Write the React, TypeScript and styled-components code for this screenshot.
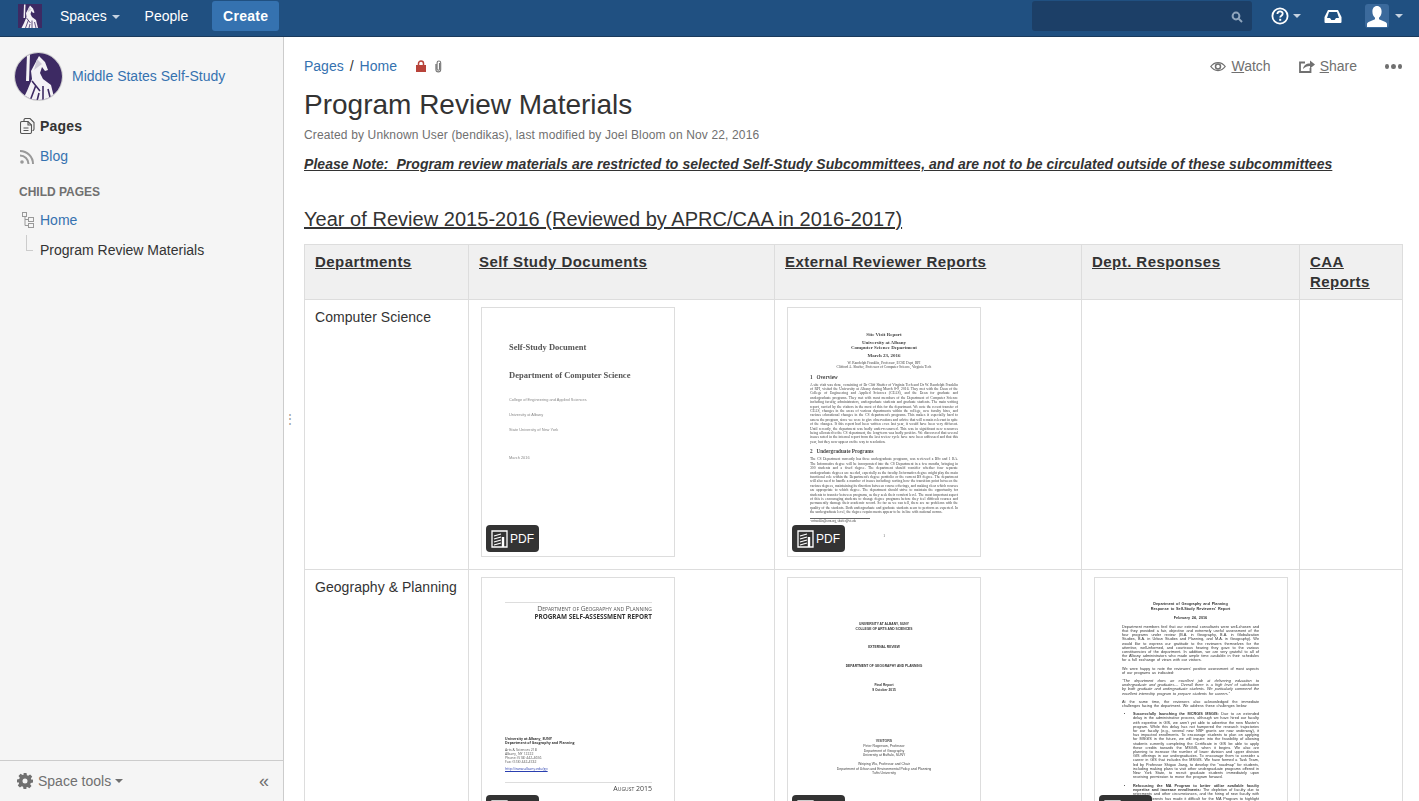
import React from 'react';
import styled, {createGlobalStyle} from 'styled-components';

const GlobalStyle = createGlobalStyle`
    html, body {
        margin: 0;
        height: 100%;
        overflow: hidden;
        background: #fff;
        font-family: 'Liberation Sans', Arial, sans-serif;
        font-size: 14px;
        line-height: 20px;
        color: #333;
    }
    * { box-sizing: border-box; }
`

const StatueLogo = ({size}: {size: number}) => (
    <svg width={size} height={size} viewBox="0 0 48 48">
        <rect width="48" height="48" fill="#3d2a63"/>
        <path fill="#f4f2f6" d="M12 1h3l-1 27h-3z"/>
        <path fill="#f4f2f6" d="M24 3l6 6 3 8-3 1-3-4-2 6 3 6 8 6 4 16H7l5-10 5-12-1-8z"/>
        <path fill="none" stroke="#3d2a63" strokeWidth="1.6" d="M17 28l8 10M21 32l-6 16M28 33v15M33 36l3 12M24 40l-2 8"/>
        <path fill="#cfcad8" d="M22 6l5 5-8 6z"/>
    </svg>
)

const Caret = styled.span<{$color?: string}>`
    display: inline-block;
    width: 0;
    height: 0;
    border-left: 4px solid transparent;
    border-right: 4px solid transparent;
    border-top: 4px solid ${props => props.$color || '#c5d2e0'};
`

const PdfIcon = () => (
    <svg width="18" height="18" viewBox="0 0 18 18" fill="none" stroke="#fff" strokeWidth="1.3">
        <path d="M1 1h11l4 0v16H1z"/>
        <path d="M3 6l7-2M3 9l7-2M3 12l7-2M3 15l7-2"/>
        <path d="M12 7v10" strokeWidth="2.4"/>
    </svg>
)

const PdfLabel = () => (
    <Badge><PdfIcon/>PDF</Badge>
)

export default function App() {
    return (
        <>
            <GlobalStyle/>
            <TopBar>
                <LogoSlot><StatueLogo size={24}/></LogoSlot>
                <NavItem>Spaces <Caret/></NavItem>
                <NavItem>People</NavItem>
                <CreateButton>Create</CreateButton>
                <TopRight>
                    <SearchBox>
                        <svg width="12" height="12" viewBox="0 0 12 12" fill="none" stroke="#8fa5bd" strokeWidth="2">
                            <circle cx="5" cy="5" r="3.4"/>
                            <path d="M7.6 7.6L11 11"/>
                        </svg>
                    </SearchBox>
                    <IconSlot>
                        <svg width="18" height="18" viewBox="0 0 18 18">
                            <circle cx="9" cy="9" r="7.6" fill="none" stroke="#fff" strokeWidth="1.8"/>
                            <path d="M6.4 7c0-3.4 5.4-3.4 5.3-.2 0 2-2.5 2-2.5 3.8" fill="none" stroke="#fff" strokeWidth="1.8"/>
                            <rect x="8.2" y="11.8" width="2" height="2" fill="#fff"/>
                        </svg>
                        <Caret/>
                    </IconSlot>
                    <InboxSlot>
                        <svg width="18" height="14" viewBox="0 0 18 14">
                            <path fill="#fff" fillRule="evenodd" d="M4 1h10l3.500 7v5a1 1 0 0 1-1 1h-15a1 1 0 0 1-1-1V8zM5 3L3 9h3l1.400 2h3.200L12 9h3l-2-6z"/>
                        </svg>
                    </InboxSlot>
                    <AvatarSlot>
                        <AvatarBox>
                            <svg width="20" height="21" viewBox="0 0 20 21">
                                <path fill="#fff" d="M10 0c3 0 4.600 2.400 4.600 5.600 0 2.600-1 5-2.600 6.200v1.400l6.400 2.800c1 .5 1.600 1.200 1.600 2.200V21H0v-2.800c0-1 .6-1.700 1.600-2.200L8 13.200v-1.400C6.400 10.600 5.400 8.200 5.400 5.600 5.400 2.400 7 0 10 0z"/>
                            </svg>
                        </AvatarBox>
                        <Caret/>
                    </AvatarSlot>
                </TopRight>
            </TopBar>
            <Layout>
                <Sidebar>
                    <SideTop>
                        <SpaceHead>
                            <SpaceAvatar><StatueLogo size={48}/></SpaceAvatar>
                            <SideLink>Middle States Self-Study</SideLink>
                        </SpaceHead>
                        <SideNav>
                            <SideRow>
                                <svg width="15" height="16" viewBox="0 0 15 16" fill="none" stroke="#555" strokeWidth="1.1">
                                    <path d="M4 3.500V2a1.500 1.500 0 0 1 1.500-1.500H10L14 4.500V11a1.500 1.500 0 0 1-1.500 1.500"/>
                                    <path d="M2 3.500h6l3.500 3.500v7a1.500 1.500 0 0 1-1.500 1.500H2A1.500 1.500 0 0 1 .500 14V5A1.500 1.500 0 0 1 2 3.500z"/>
                                    <path d="M8 3.500V7h3.500M3.500 10h5M3.500 12.500h5"/>
                                </svg>
                                <strong>Pages</strong>
                            </SideRow>
                            <SideRow>
                                <svg width="15" height="15" viewBox="0 0 15 15" fill="none" stroke="#999" strokeWidth="2">
                                    <path d="M0 6.500a8.500 8.500 0 0 1 8.500 8.500M0 2a13 13 0 0 1 13 13"/>
                                    <circle cx="2" cy="13" r="1.800" fill="#999" stroke="none"/>
                                </svg>
                                <SideLink>Blog</SideLink>
                            </SideRow>
                        </SideNav>
                        <SideHeading>CHILD PAGES</SideHeading>
                        <SideRow>
                            <TreeIconSlot>
                                <svg width="12" height="16" viewBox="0 0 12 16" fill="none" stroke="#999">
                                    <rect x=".5" y=".5" width="4" height="4"/>
                                    <rect x="6.500" y="5.500" width="5" height="4"/>
                                    <rect x="6.500" y="11.500" width="5" height="4"/>
                                    <path d="M3 4.500V13.500H6.500M3 7.500H6.500"/>
                                </svg>
                            </TreeIconSlot>
                            <SideLink>Home</SideLink>
                        </SideRow>
                        <TreeChild>Program Review Materials</TreeChild>
                    </SideTop>
                    <SideFooter>
                        <svg width="16" height="16" viewBox="0 0 16 16">
                            <path fill="#707070" fillRule="evenodd" d="M6.500 0h3l.4 2.200 1.300.6L13.100 1.500l2.100 2.100-1.300 1.900.6 1.300L16 6.500v3l-2.200.4-.6 1.300 1.300 1.900-2.100 2.100-1.900-1.300-1.300.6L9.500 16h-3l-.4-2.200-1.300-.6-1.900 1.300-2.100-2.100 1.300-1.900-.6-1.300L0 9.500v-3l2.200-.4.600-1.300L1.500 2.900 3.600.8l1.900 1.300 1.300-.6zM8 5.500a2.500 2.500 0 1 0 0 5 2.500 2.500 0 0 0 0-5z"/>
                        </svg>
                        <FooterLabel>Space tools</FooterLabel>
                        <Caret $color="#707070"/>
                        <Collapse>«</Collapse>
                    </SideFooter>
                </Sidebar>
                <Main>
                    <Splitter>⋮</Splitter>
                    <PageTop>
                        <Crumbs>
                            <BlueLink>Pages</BlueLink>
                            <Slash>/</Slash>
                            <BlueLink>Home</BlueLink>
                            <CrumbIcons>
                                <svg width="10" height="12" viewBox="0 0 10 12">
                                    <path fill="none" stroke="#b8433a" strokeWidth="1.500" d="M2.500 5.500V3.500a2.500 2.500 0 0 1 5 0v2"/>
                                    <rect y="5" width="10" height="7" fill="#b8433a"/>
                                </svg>
                                <svg width="9" height="13" viewBox="0 0 9 13" fill="none" stroke="#777" strokeWidth="1.100">
                                    <path d="M5.500 3v6a1.200 1.200 0 0 1-2.400 0V2.800a1.500 1.500 0 0 1 3.600 0v6.700a2.300 2.300 0 0 1-4.800 0V4"/>
                                </svg>
                            </CrumbIcons>
                        </Crumbs>
                        <Actions>
                            <ActionItem>
                                <svg width="16" height="11" viewBox="0 0 16 11" fill="none" stroke="#707070" strokeWidth="1.300">
                                    <path d="M.8 5.500C4.500.2 11.500.2 15.200 5.500 11.500 10.800 4.500 10.800.8 5.500z"/>
                                    <circle cx="8" cy="5.500" r="2.500" strokeWidth="1.500"/>
                                </svg>
                                <span><u>W</u>atch</span>
                            </ActionItem>
                            <ActionItem>
                                <svg width="16" height="14" viewBox="0 0 16 14">
                                    <path fill="none" stroke="#707070" strokeWidth="1.800" d="M6 3.500H1v9.500h10.500V9"/>
                                    <path fill="#707070" d="M4 10c.5-3.500 3-5.500 7-5.500V1.500L16 5.500 11 9.500V7C8 7 6 8 4 10z"/>
                                </svg>
                                <span><u>S</u>hare</span>
                            </ActionItem>
                            <MoreDots><i/><i/><i/></MoreDots>
                        </Actions>
                    </PageTop>
                    <Title>Program Review Materials</Title>
                    <Meta>Created by Unknown User (bendikas), last modified by Joel Bloom on Nov 22, 2016</Meta>
                    <Note>Please Note:&nbsp; Program review materials are restricted to selected Self-Study Subcommittees, and are not to be circulated outside of these subcommittees</Note>
                    <YearHeading>Year of Review 2015-2016 (Reviewed by APRC/CAA in 2016-2017)</YearHeading>
                    <ReviewTable>
                        <colgroup>
                            <col style={{width: 164}}/>
                            <col style={{width: 306}}/>
                            <col style={{width: 307}}/>
                            <col style={{width: 218}}/>
                            <col style={{width: 103}}/>
                        </colgroup>
                        <thead>
                            <tr>
                                <HeadCell>Departments</HeadCell>
                                <HeadCell>Self Study Documents</HeadCell>
                                <HeadCell>External Reviewer Reports</HeadCell>
                                <HeadCell>Dept. Responses</HeadCell>
                                <HeadCell>CAA Reports</HeadCell>
                            </tr>
                        </thead>
                        <tbody>
                            <tr>
                                <Cell>Computer Science</Cell>
                                <Cell>
                                    <Thumb>
                                        <CoverOne>
                                            <CoverTitle>Self-Study Document</CoverTitle>
                                            <CoverTitle>Department of Computer Science</CoverTitle>
                                            <CoverSmall>College of Engineering and Applied Sciences</CoverSmall>
                                            <CoverSmall>University at Albany</CoverSmall>
                                            <CoverSmall>State University of New York</CoverSmall>
                                            <CoverDate>March 2016</CoverDate>
                                        </CoverOne>
                                        <PdfLabel/>
                                    </Thumb>
                                </Cell>
                                <Cell>
                                    <Thumb>
                                        <Report>
                                            <ReportHead>Site Visit Report</ReportHead>
                                            <ReportHead>University at Albany<br/>Computer Science Department</ReportHead>
                                            <ReportHead>March 23, 2016</ReportHead>
                                            <ReportAuthors>W. Randolph Franklin, Professor, ECSE Dept, RPI<br/>Clifford A. Shaffer, Professor of Computer Science, Virginia Tech</ReportAuthors>
                                            <ReportSection>1&nbsp;&nbsp;&nbsp;Overview</ReportSection>
                                            <ReportBody>A site visit was done, consisting of Dr Cliff Shaffer of Virginia Tech and Dr W. Randolph Franklin of RPI, visited the University at Albany during March 8-9, 2016. They met with the Dean of the College of Engineering and Applied Sciences (CEAS), and the Dean for graduate and undergraduate programs. They met with most members of the Department of Computer Science including faculty, administrators, undergraduate students and graduate students. The main writing report, carried by the visitors in the most of this for the department. We note the recent transfer of CEAS, changes in the areas of various departments within the college, new faculty hires, and various educational changes in the CS department's programs. This makes it especially hard to assess the program, since we were to give observations and advice that will remain relevant in spite of the changes. If this report had been written even last year, it would have been very different. Until recently, the department was badly under-resourced. This was in significant new resources being allocated to the CS department, the long-term was badly positive. We discovered that several issues noted in the internal report from the last review cycle have now been addressed and that this year, but they now appear on the way to resolution.</ReportBody>
                                            <ReportSection>2&nbsp;&nbsp;&nbsp;Undergraduate Programs</ReportSection>
                                            <ReportBody>The CS Department currently has three undergraduate programs, was reviewed a BSc and 1 BA. The Informatics degree will be incorporated into the CS Department in a few months, bringing in 300 students and a fixed degree. The department should consider whether four separate undergraduate degrees are needed, especially as the faculty. Informatics degree might play the main functional role within the Department's degree portfolio or the current BS degree. The department will also need to handle a number of issues including: sorting how the transition point between the various degrees, maintaining its direction between course offerings, and making clear which courses are appropriate to which degree. The department should strive to maintain the opportunity for students to transfer between programs, as they seek their comfort level. The most important aspect of this is encouraging students to change degree programs before they feel difficult courses and permanently damage their academic record. So far as we can tell, there are no problems with the quality of the students. Both undergraduate and graduate students seem to perform as expected. In the undergraduate level, the degree requirements appear to be in line with national norms.</ReportBody>
                                            <Footnote>¹wrfranklin@acm.org, shaffer@vt.edu</Footnote>
                                            <PageNumber>1</PageNumber>
                                        </Report>
                                        <PdfLabel/>
                                    </Thumb>
                                </Cell>
                                <Cell/>
                                <Cell/>
                            </tr>
                            <tr>
                                <Cell>Geography &amp; Planning</Cell>
                                <Cell>
                                    <Thumb>
                                        <GeoCover>
                                            <GeoRule/>
                                            <GeoDept>Department of Geography and Planning</GeoDept>
                                            <GeoTitle>PROGRAM SELF-ASSESSMENT REPORT</GeoTitle>
                                            <GeoAddress>
                                                <strong>University at Albany, SUNY<br/>Department of Geography and Planning</strong>
                                                <p>Arts &amp; Sciences 218<br/>Albany, NY 12222<br/>Phone: (518) 442-4656<br/>Fax: (518) 442-4742</p>
                                                <GeoUrl>http://www.albany.edu/gp</GeoUrl>
                                            </GeoAddress>
                                            <GeoRule/>
                                            <GeoDate>August 2015</GeoDate>
                                        </GeoCover>
                                        <PdfLabel/>
                                    </Thumb>
                                </Cell>
                                <Cell>
                                    <Thumb>
                                        <ReviewCover>
                                            <strong>UNIVERSITY AT ALBANY, SUNY<br/>COLLEGE OF ARTS AND SCIENCES</strong>
                                            <strong>EXTERNAL REVIEW</strong>
                                            <strong>DEPARTMENT OF GEOGRAPHY AND PLANNING</strong>
                                            <strong>Final Report<br/>9 October 2015</strong>
                                            <ReviewVisitors>
                                                <strong>VISITORS</strong><br/>
                                                Peter Rogerson, Professor<br/>Department of Geography<br/>University at Buffalo, SUNY
                                            </ReviewVisitors>
                                            <div>Weiping Wu, Professor and Chair<br/>Department of Urban and Environmental Policy and Planning<br/>Tufts University</div>
                                        </ReviewCover>
                                        <PdfLabel/>
                                    </Thumb>
                                </Cell>
                                <Cell>
                                    <Thumb>
                                        <Response>
                                            <ResponseHead>Department of Geography and Planning<br/>Response to Self-Study Reviewers' Report</ResponseHead>
                                            <ResponseHead>February 24, 2016</ResponseHead>
                                            <p>Department members feel that our external consultants were well-chosen and that they provided a fair, objective and extremely useful assessment of the four programs under review (B.A. in Geography, B.A. in Globalization Studies, B.A. in Urban Studies and Planning, and M.A. in Geography). We would like to express our gratitude to the reviewers themselves for the attentive, well-informed, and courteous hearing they gave to the various constituencies of the department. In addition, we are very grateful to all of the Albany administrators who made ample time available in their schedules for a full exchange of views with our visitors.</p>
                                            <p>We were happy to note the reviewers' positive assessment of most aspects of our programs as indicated:</p>
                                            <p><em>"The department does an excellent job at delivering education to undergraduate and graduates.... Overall there is a high level of satisfaction by both graduate and undergraduate students. We particularly commend the excellent internship program to prepare students for careers."</em></p>
                                            <p>At the same time, the reviewers also acknowledged the immediate challenges facing the department. We address these challenges below:</p>
                                            <ResponseList>
                                                <li><strong>Successfully launching the MCRGIS MSGIS:</strong> Due to an extended delay in the administrative process, although we have hired our faculty with expertise in GIS, we aren't yet able to advertise the new Master's program. While this delay has not hampered the research trajectories for our faculty (e.g., several new NSF grants are now underway), it has impacted enrollments. To encourage students to plan on applying for MSGIS in the future, we will inquire into the feasibility of allowing students currently completing the Certificate in GIS be able to apply these credits towards the MSGIS, when it begins. We also are planning to increase the number of lower division and upper division GIS offerings in our undergraduates. To encourage them to consider a career in GIS that includes the MSGIS. We have formed a Task Team, led by Professor Shiguo Jiang, to develop the "roadmap" for students, including making plans to visit other undergraduate programs offered in New York State, to recruit graduate students immediately upon receiving permission to move the program forward.</li>
                                                <li><strong>Refocusing the MA Program to better utilize available faculty expertise and increase enrollments:</strong> The depletion of faculty due to retirements and other circumstances, and the hiring of new faculty with different interests has made it difficult for the MA Program to highlight career paths and</li>
                                            </ResponseList>
                                        </Response>
                                        <PdfLabel/>
                                    </Thumb>
                                </Cell>
                                <Cell/>
                            </tr>
                        </tbody>
                    </ReviewTable>
                </Main>
            </Layout>
        </>
    );
}

const TopBar = styled.header`
    height: 37px;
    background: #205081;
    border-bottom: 1px solid #1a3a5c;
    display: flex;
    align-items: flex-start;
    color: #fff;
`
const LogoSlot = styled.div`
    width: 60px;
    height: 36px;
    padding: 4px 0 0 18px;
    flex-shrink: 0;
    & svg { display: block; }
`
const NavItem = styled.div`
    height: 32px;
    line-height: 32px;
    margin-right: 25px;
    color: #fff;
    white-space: nowrap;
    & span { margin-left: 1px; vertical-align: 2px; }
`
const CreateButton = styled.div`
    width: 67px;
    height: 30px;
    margin: 1px 0 0 -1px;
    border-radius: 3px;
    background: #3572b0;
    font-weight: 700;
    letter-spacing: 0.3px;
    line-height: 30px;
    text-align: center;
`
const TopRight = styled.div`
    margin-left: auto;
    display: flex;
    align-items: center;
    height: 36px;
`
const SearchBox = styled.div`
    width: 220px;
    height: 30px;
    margin: -5px 19px 0 0;
    background: #1c3f67;
    border-radius: 3px;
    display: flex;
    align-items: center;
    justify-content: flex-end;
    padding: 3px 9px 0 0;
`
const IconSlot = styled.div`
    display: flex;
    align-items: center;
    gap: 4px;
    margin: -4px 0 0 0;
    width: 33px;
`
const InboxSlot = styled.div`
    margin: -4px 23px 0 20px;
    display: flex;
    width: 18px;
`
const AvatarSlot = styled.div`
    display: flex;
    align-items: center;
    gap: 6px;
    margin: -4px 16px 0 0;
`
const AvatarBox = styled.div`
    width: 24px;
    height: 24px;
    background: #3b6a9c;
    border-radius: 3px;
    display: flex;
    align-items: flex-end;
    justify-content: center;
    padding-bottom: 1px;
`
const Layout = styled.div`
    display: flex;
    height: 764px;
`
const Sidebar = styled.aside`
    width: 284px;
    flex-shrink: 0;
    background: #f5f5f5;
    border-right: 1px solid #ccc;
    display: flex;
    flex-direction: column;
    justify-content: space-between;
`
const SideTop = styled.div`
    padding: 14px 14px 0 19px;
`
const SpaceHead = styled.div`
    display: flex;
    align-items: center;
    gap: 9px;
    margin: 0 0 10px -5px;
    height: 50px;
`
const SpaceAvatar = styled.div`
    width: 49px;
    height: 49px;
    border-radius: 50%;
    border: 1px solid #ccc;
    overflow: hidden;
    flex-shrink: 0;
    & svg { display: block; }
`
const SideLink = styled.a`
    color: #3572b0;
`
const SideNav = styled.div`
    margin-bottom: 11px;
`
const SideRow = styled.div`
    display: flex;
    align-items: center;
    height: 30px;
    gap: 5px;
    color: #333;
    & > svg { flex-shrink: 0; margin-left: 1px; }
    & strong { color: #333; letter-spacing: 0.2px; }
`
const SideHeading = styled.div`
    font-size: 12px;
    font-weight: 700;
    color: #707070;
    height: 20px;
    line-height: 20px;
    margin-bottom: 3px;
`
const TreeIconSlot = styled.div`
    width: 16px;
    padding-left: 3px;
    display: flex;
`
const TreeChild = styled.div`
    position: relative;
    height: 30px;
    line-height: 30px;
    padding-left: 21px;
    color: #333;
    &::before {
        content: '';
        position: absolute;
        left: 7px;
        top: 0;
        width: 6px;
        height: 15px;
        border-left: 1px solid #ccc;
        border-bottom: 1px solid #ccc;
    }
`
const SideFooter = styled.div`
    height: 41px;
    border-top: 1px solid #ccc;
    display: flex;
    align-items: center;
    padding: 0 14px 0 17px;
    color: #707070;
`
const FooterLabel = styled.span`
    margin: 0 4px 0 5px;
`
const Collapse = styled.span`
    margin-left: auto;
    font-size: 18px;
    color: #707070;
`
const Main = styled.main`
    position: relative;
    flex: 1;
    min-width: 0;
    padding: 19px 17px 0 20px;
`
const Splitter = styled.span`
    position: absolute;
    left: 0;
    top: 372px;
    color: #999;
    font-size: 12px;
`
const PageTop = styled.div`
    display: flex;
    justify-content: space-between;
    align-items: center;
    height: 20px;
`
const Crumbs = styled.div`
    display: flex;
    align-items: center;
`
const BlueLink = styled.a`
    color: #3572b0;
`
const Slash = styled.span`
    margin: 0 6px;
    color: #333;
`
const CrumbIcons = styled.span`
    display: flex;
    align-items: center;
    gap: 8px;
    margin-left: 19px;
`
const Actions = styled.div`
    display: flex;
    align-items: center;
    color: #707070;
`
const ActionItem = styled.div`
    display: flex;
    align-items: center;
    gap: 5px;
    margin-right: 28px;
    & u { text-decoration: underline; }
`
const MoreDots = styled.div`
    display: flex;
    gap: 2px;
    width: 17px;
    & i {
        display: block;
        width: 5px;
        height: 5px;
        border-radius: 50%;
        background: #707070;
    }
`
const Title = styled.h1`
    margin: 10px 0 0;
    font-size: 28px;
    font-weight: 400;
    line-height: 38px;
    color: #333;
`
const Meta = styled.div`
    margin-top: 1px;
    font-size: 12px;
    letter-spacing: 0.14px;
    line-height: 20px;
    color: #707070;
`
const Note = styled.p`
    margin: 9px 0 0;
    font-weight: 700;
    font-style: italic;
    letter-spacing: 0.045px;
    text-decoration: underline;
    color: #333;
`
const YearHeading = styled.h2`
    margin: 30px 0 0;
    font-size: 20px;
    font-weight: 400;
    letter-spacing: 0.03px;
    line-height: 30px;
    text-decoration: underline;
    color: #333;
`
const ReviewTable = styled.table`
    margin-top: 10px;
    width: 1098px;
    table-layout: fixed;
    border-collapse: collapse;
`
const Cell = styled.td`
    border: 1px solid #ddd;
    padding: 7px 10px;
    vertical-align: top;
    letter-spacing: 0.05px;
    color: #333;
`
const HeadCell = styled.th`
    border: 1px solid #ddd;
    padding: 7px 10px;
    vertical-align: top;
    text-align: left;
    background: #f0f0f0;
    font-size: 15px;
    font-weight: 700;
    letter-spacing: 0.45px;
    text-decoration: underline;
    color: #333;
`
const Thumb = styled.div`
    position: relative;
    width: 194px;
    height: 250px;
    margin: 0 0 5px 2px;
    border: 1px solid #ddd;
    background: #fff;
    overflow: hidden;
    letter-spacing: 0;
`
const Badge = styled.div`
    position: absolute;
    left: 4px;
    bottom: 4px;
    width: 53px;
    height: 27px;
    border-radius: 4px;
    background: #333;
    color: #fff;
    display: flex;
    align-items: center;
    gap: 1px;
    padding-left: 5px;
    font-size: 12px;
`
const CoverOne = styled.div`
    padding: 33px 0 0 27px;
    color: #555;
    font-family: 'Liberation Serif', serif;
    filter: blur(0.35px);
`
const CoverTitle = styled.div`
    font-size: 8.500px;
    font-weight: 700;
    line-height: 12px;
    margin-bottom: 16px;
    color: #555;
`
const CoverSmall = styled.div`
    font-family: 'Liberation Sans', sans-serif;
    font-size: 3.900px;
    line-height: 5px;
    margin-bottom: 10px;
    color: #888;
`
const CoverDate = styled(CoverSmall)`
    margin-top: 23px;
`
const Report = styled.div`
    padding: 24px 22px 0;
    font-family: 'Liberation Serif', serif;
    color: #444;
    filter: blur(0.3px);
`
const ReportHead = styled.div`
    text-align: center;
    font-weight: 700;
    font-size: 5px;
    line-height: 5px;
    margin-bottom: 3px;
    color: #444;
`
const ReportAuthors = styled.div`
    text-align: center;
    font-size: 3.600px;
    line-height: 4.300px;
    margin-bottom: 4px;
`
const ReportSection = styled.div`
    font-size: 5.200px;
    font-weight: 700;
    line-height: 7px;
    margin-bottom: 2px;
    color: #444;
`
const ReportBody = styled.p`
    margin: 0 0 4px;
    font-size: 3.700px;
    line-height: 4.400px;
    text-align: justify;
`
const Footnote = styled.div`
    margin-top: -1px;
    border-top: 1px solid #666;
    width: 60px;
    font-size: 3px;
    line-height: 4px;
    white-space: nowrap;
`
const PageNumber = styled.div`
    margin-top: 11px;
    text-align: center;
    font-size: 3.400px;
    line-height: 4px;
`
const GeoCover = styled.div`
    padding: 24px 22px 0 23px;
    font-family: 'Open Sans', 'Liberation Sans', sans-serif;
    color: #444;
    filter: blur(0.25px);
`
const GeoRule = styled.div`
    border-top: 1px solid #ddd;
`
const GeoDept = styled.div`
    margin-top: 2px;
    text-align: right;
    font-size: 6.800px;
    line-height: 7px;
    font-variant: small-caps;
    white-space: nowrap;
    color: #555;
`
const GeoTitle = styled.div`
    text-align: right;
    font-size: 6.400px;
    font-weight: 700;
    line-height: 9px;
    white-space: nowrap;
    color: #333;
`
const GeoAddress = styled.div`
    margin: 116px 0 11px 0;
    font-size: 3.500px;
    line-height: 4.200px;
    color: #333;
    & strong { display: block; }
    & p { margin: 3px 0; color: #555; line-height: 3.800px; }
`
const GeoUrl = styled.div`
    color: #2a3fb0;
    text-decoration: underline;
    margin-top: 3px;
`
const GeoDate = styled.div`
    margin-top: 2px;
    text-align: right;
    font-size: 7px;
    line-height: 8px;
    font-variant: small-caps;
    color: #444;
`
const ReviewCover = styled.div`
    padding: 44px 10px 0;
    text-align: center;
    font-family: 'Liberation Sans', sans-serif;
    font-size: 3.500px;
    line-height: 4.700px;
    color: #444;
    filter: blur(0.3px);
    & > strong { display: block; margin-bottom: 14px; color: #333; font-size: 3.300px; }
`
const ReviewVisitors = styled.div`
    margin: 47px 0 4px;
`
const Response = styled.div`
    padding: 24px 28px 0 27px;
    font-family: 'Liberation Sans', sans-serif;
    font-size: 3.800px;
    word-spacing: 0.7px;
    line-height: 4.200px;
    color: #333;
    text-align: justify;
    filter: blur(0.25px);
    & p { margin: 0 0 4px; }
`
const ResponseHead = styled.div`
    font-weight: 700;
    text-align: center;
    line-height: 4.600px;
    margin-bottom: 4.500px;
`
const ResponseList = styled.ul`
    margin: 0;
    padding: 0 0 0 11px;
    & li { margin-bottom: 4.500px; }
`
